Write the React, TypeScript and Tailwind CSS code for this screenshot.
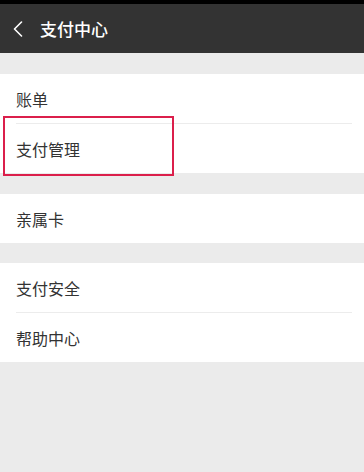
const font = { fontFamily: '"Noto Sans CJK SC", "Liberation Sans", sans-serif' };

function Row({ label, children }: { label: string; children?: React.ReactNode }) {
  return (
    <div className="relative flex h-[49px] items-center pl-[16px] text-[16px] text-[#333333]">
      {label}
      {children}
    </div>
  );
}

function Divider() {
  return <div className="ml-[16px] mr-[12px] h-px bg-[#ececec]" />;
}

export default function App() {
  return (
    <div className="flex h-[472px] w-[364px] flex-col bg-[#ebebeb]" style={font}>
      <div className="h-[4px] bg-black" />
      <div className="flex h-[49px] items-center bg-[#333333] pl-[13px] text-white">
        <svg width="10" height="16" viewBox="0 0 10 16" fill="none">
          <polyline points="8.5,1 1.5,8 8.5,15" stroke="white" strokeWidth="1.6" strokeLinecap="round" strokeLinejoin="round" />
        </svg>
        <span className="ml-[17px] text-[17px] font-medium">支付中心</span>
      </div>

      <div className="mt-[21px] bg-white">
        <Row label="账单" />
        <Divider />
        <Row label="支付管理">
          {/* highlight box */}
          <div className="absolute left-[3px] top-[-8px] h-[60px] w-[171px] border-2 border-[#db1f4b]" />
        </Row>
      </div>

      <div className="mt-[21px] bg-white">
        <Row label="亲属卡" />
      </div>

      <div className="mt-[20px] bg-white">
        <Row label="支付安全" />
        <Divider />
        <Row label="帮助中心" />
      </div>
    </div>
  );
}
